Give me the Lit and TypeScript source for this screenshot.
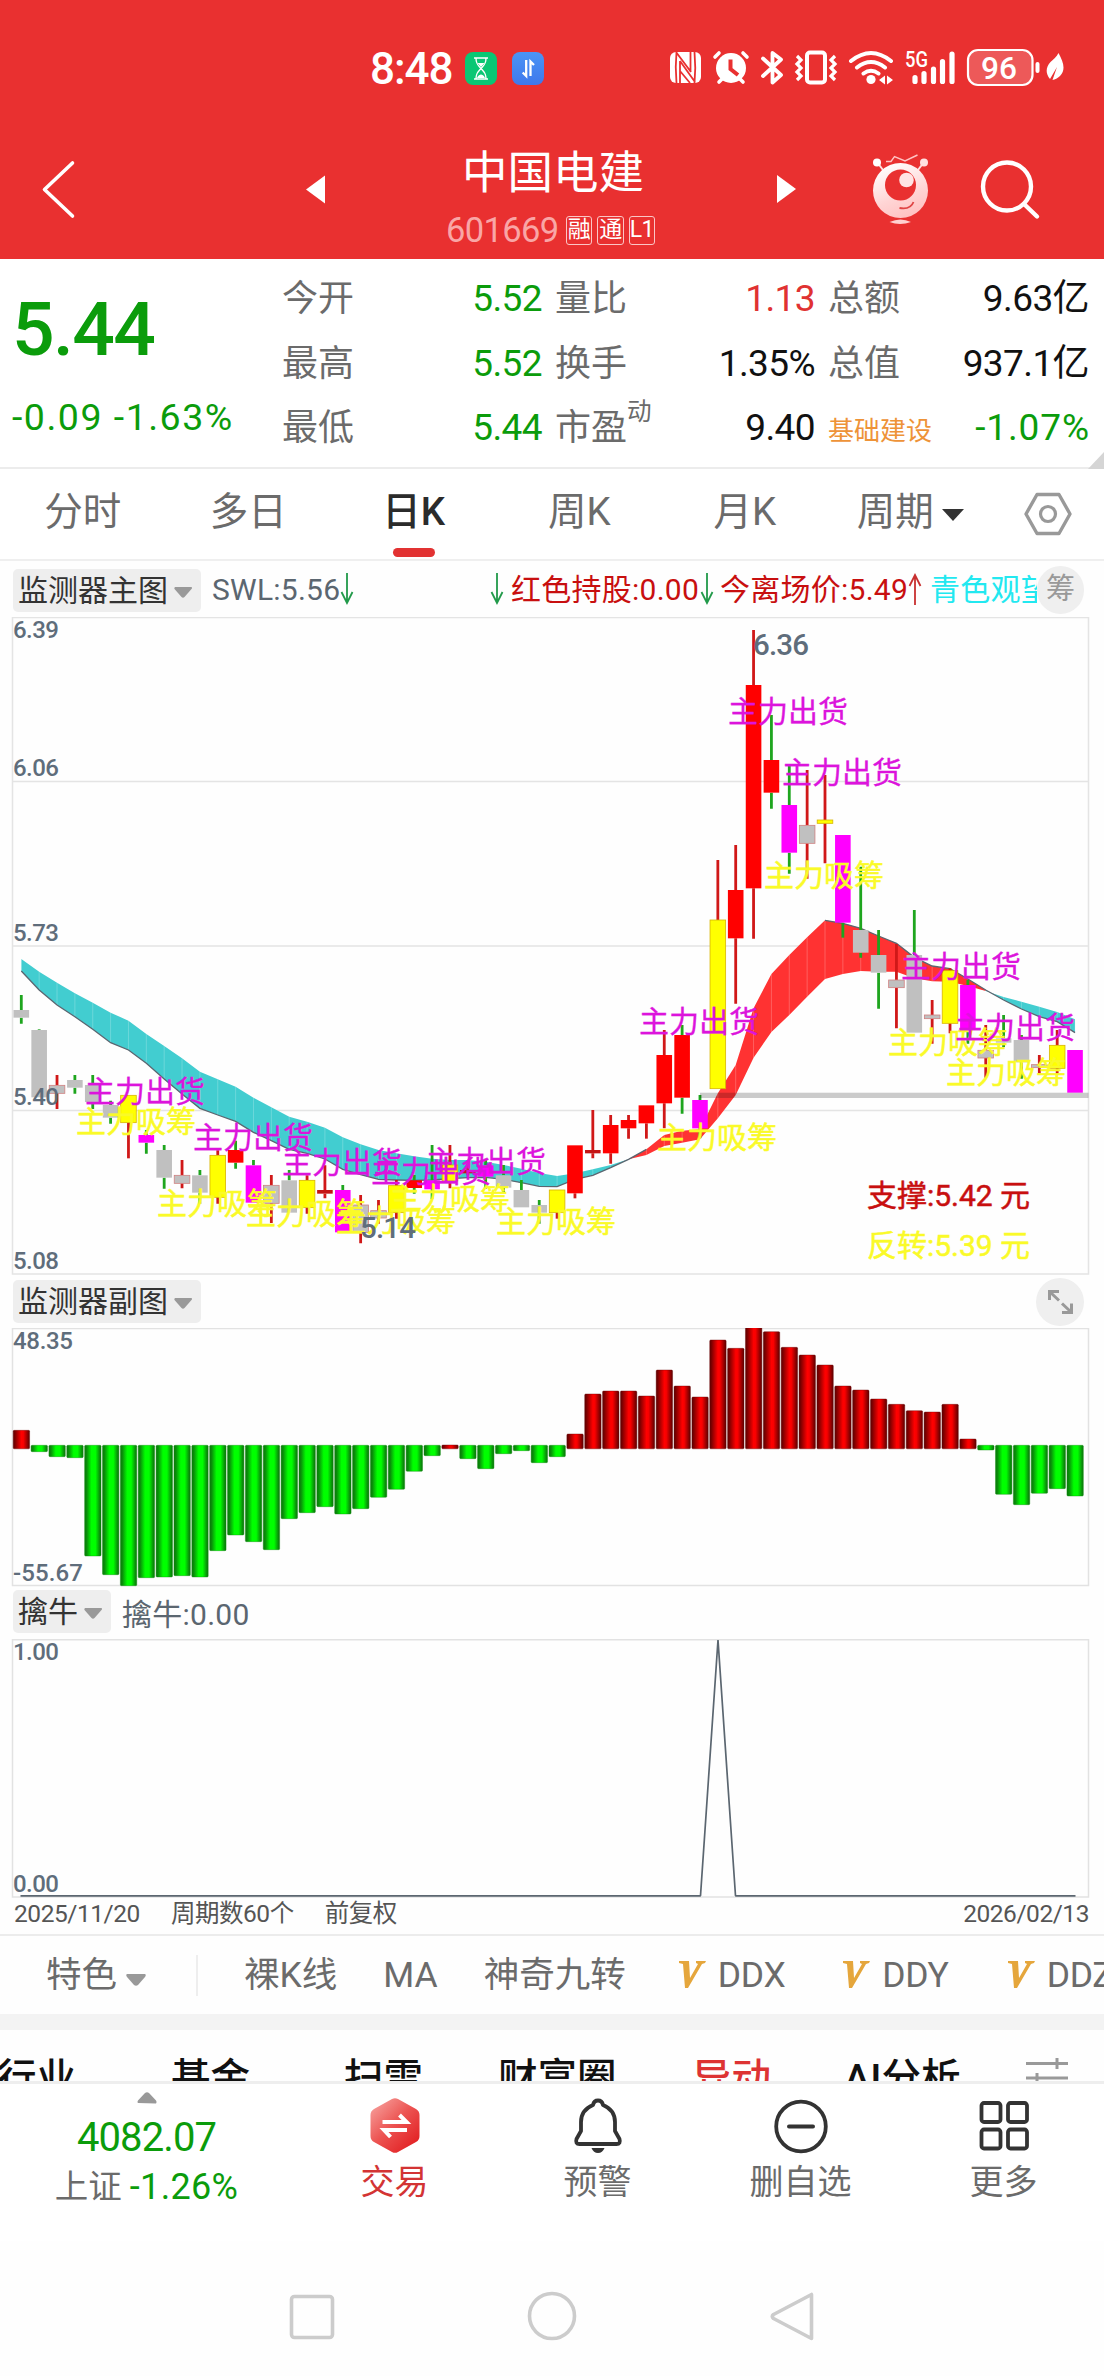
import { LitElement, html, svg, css } from "lit";
import { customElement, property } from "lit/decorators.js";

const X0 = 21.3;
const STEP = 17.86;
const cx = (i: number) => X0 + STEP * i;
const py = (v: number) => 900 + v / 3;

const FILL: Record<string, string> = { g: "#c0c0c0", r: "#ff0000", y: "#ffff00", m: "#ff00ff", d: "#c41414" };
const UP = "#d01818";
const DOWN = "#1ea51e";

// kind, wick colour (u/d), body top, body bottom, wick top, wick bottom
type Candle = [string, string, number, number, number, number];
const CANDLES: Candle[] = [
  ["g", "d", 330, 353, 285, 371], ["g", "d", 390, 592, 388, 592], ["g", "u", 556, 580, 525, 627],
  ["g", "d", 540, 563, 525, 581], ["g", "d", 555, 606, 525, 627], ["g", "d", 615, 653, 602, 671],
  ["y", "u", 586, 668, 586, 775], ["m", "d", 705, 728, 690, 761], ["g", "d", 750, 833, 735, 866],
  ["g", "u", 826, 850, 780, 865], ["g", "d", 826, 878, 810, 911], ["y", "u", 766, 892, 751, 911],
  ["r", "d", 750, 788, 722, 806], ["m", "d", 796, 908, 780, 908], ["g", "u", 856, 910, 825, 969],
  ["g", "d", 841, 938, 810, 938], ["y", "u", 841, 923, 826, 941], ["d", "u", 870, 881, 796, 895],
  ["m", "d", 870, 997, 855, 997], ["g", "u", 915, 998, 885, 1030], ["g", "u", 932, 954, 900, 971],
  ["y", "u", 857, 938, 840, 956], ["r", "d", 841, 864, 825, 881], ["m", "d", 841, 868, 735, 897],
  ["y", "u", 795, 843, 735, 865], ["d", "u", 810, 820, 796, 826], ["m", "d", 796, 830, 780, 866],
  ["g", "d", 826, 863, 795, 876], ["g", "d", 870, 922, 840, 922], ["g", "d", 915, 938, 900, 971],
  ["y", "u", 870, 938, 870, 956], ["r", "u", 736, 880, 736, 895], ["d", "u", 750, 760, 630, 775],
  ["r", "u", 675, 760, 645, 791], ["r", "u", 660, 685, 645, 716], ["r", "u", 616, 670, 616, 716],
  ["r", "u", 465, 610, 390, 685], ["r", "d", 405, 593, 375, 641], ["m", "d", 600, 685, 585, 715],
  ["y", "u", 60, 566, -120, 566], ["r", "u", -30, 115, -165, 311], ["r", "u", -645, -35, -810, 116],
  ["r", "d", -420, -322, -555, -274], ["m", "d", -285, -142, -408, -79], ["g", "u", -224, -170, -390, -64],
  ["y", "u", -240, -230, -375, -110], ["m", "d", -195, 68, -195, 113], ["g", "d", 90, 158, -100, 173],
  ["g", "d", 165, 218, 90, 326], ["g", "u", 240, 263, 132, 385], ["g", "d", 165, 398, 30, 398],
  ["g", "u", 345, 356, 300, 431], ["y", "u", 212, 370, 205, 400], ["m", "d", 255, 386, 240, 431],
  ["g", "u", 451, 474, 375, 533], ["g", "d", 415, 428, 345, 441], ["g", "d", 420, 487, 405, 536],
  ["g", "u", 494, 503, 465, 521], ["y", "u", 436, 505, 390, 521], ["m", "d", 450, 578, 450, 578],
];

const FAST = [213, 270, 315, 350, 388, 428, 450, 490, 537, 582, 625, 645, 664, 697, 722, 748, 760, 777, 808, 824,
  838, 840, 841, 840, 836, 833, 832, 838, 848, 859, 860, 838, 826, 803, 778, 748, 705, 692, 688, 580,
  495, 325, 222, 165, 112, 61, 70, 85, 108, 130, 172, 198, 206, 237, 270, 300, 327, 350, 365, 398];
const SLOW = [177, 215, 248, 280, 308, 338, 362, 402, 438, 475, 515, 538, 560, 593, 622, 650, 665, 683, 712, 733,
  750, 760, 769, 776, 780, 780, 785, 795, 806, 819, 828, 820, 808, 795, 778, 765, 738, 728, 718, 655,
  585, 473, 396, 345, 290, 237, 222, 213, 215, 215, 235, 244, 245, 258, 273, 291, 305, 320, 336, 358];

const BARS = [451, 515, 530, 533, 828, 884, 917, 893, 891, 887, 891, 812, 765, 785, 809, 716, 698, 680, 702, 686,
  652, 628, 574, 527, 495, 536, 566, 521, 512, 548, 530, 462, 342, 333, 333, 348, 270, 318, 351, 180,
  205, 141, 155, 202, 225, 255, 318, 330, 357, 373, 392, 396, 373, 477, 510, 643, 674, 640, 626, 648];

const SELL: [number, number][] = [[86, 1091], [194, 1137], [283, 1162], [372, 1171], [427, 1161], [640, 1021], [902, 966], [956, 1027], [729, 711], [783, 772]];
const BUY: [number, number][] = [[77, 1121], [158, 1203], [247, 1213], [337, 1220], [391, 1198], [497, 1221], [658, 1137], [765, 875], [889, 1042], [947, 1072]];

const CROSS_A = 34;
const CROSS_B = 54;
const ribbon = (a: number, b: number) => {
  const idx = Array.from({ length: b - a + 1 }, (_, k) => a + k);
  return [...idx.map((i) => `${cx(i)},${py(SLOW[i])}`), ...idx.reverse().map((i) => `${cx(i)},${py(FAST[i])}`)].join(" ");
};

const FONT = `Roboto, "Noto Sans CJK SC", sans-serif`;

@customElement("status-bar")
export class StatusBar extends LitElement {
  static styles = css`
    :host { display: flex; height: 130px; box-sizing: border-box; padding: 48px 39px 0 370px; color: #fff; }
    .clock { font-size: 44px; font-weight: 500; line-height: 42px; letter-spacing: -1px; width: 95px; }
    .apps { margin-top: 4px; display: flex; gap: 15px; height: 33px; flex: 1; }
    svg { display: block; }
  `;
  render() {
    return html`
      <div class="clock">8:48</div>
      <div class="apps">
        <svg width="32" height="33" viewBox="0 0 32 33"><rect width="32" height="33" rx="8" fill="#0ac774"/>
          <g fill="none" stroke="#fff" stroke-width="1.4"><path d="M9 6h14M9 27h14M11 6c0 6 2 7 5 10.500C19 13 21 12 21 6M11 27c0-6 2-7 5-10.500 3 3.500 5 4.500 5 10.500"/></g>
          <path d="M12.500 11h7l-3.500 4zM12 26c1-3 3-3.500 4-3.500s3 .5 4 3.500z" fill="#fff"/></svg>
        <svg width="32" height="33" viewBox="0 0 32 33"><defs><linearGradient id="b" x2="0" y2="1"><stop stop-color="#4b94f5"/><stop offset="1" stop-color="#3f78ec"/></linearGradient></defs>
          <rect width="32" height="33" rx="8" fill="url(#b)"/><g fill="none" stroke="#fff" stroke-width="2.300"><path d="M14.200 8v16l-3.500-3.500M18.500 24V9.500l3.500 3.500"/></g></svg>
      </div>
      <svg width="396" height="40" viewBox="669 48 396 40">
        <rect x="670" y="52" width="31" height="31" rx="6" fill="#fff"/>
        <g fill="none" stroke="#e93030" stroke-width="1.800"><path d="M676.500 52q-1.500 15 0 31M680 61v22M690.500 52v20M694.500 83q1.500-15 0-31M676 52l15 20M680 61l15 21M680 71l10 12"/></g>
        <g stroke="#fff" stroke-width="3.600" stroke-linecap="round" fill="none"><path d="M715 57l4-4M747 57l-4-4M719 82l4-4M743 82l-4-4"/></g>
        <circle cx="731" cy="68" r="15" fill="#fff"/><path d="M730.500 59.500v9.500l7.500 6" fill="none" stroke="#e93030" stroke-width="4"/>
        <path d="M763 58.500l18 16.500-8.500 7.500V53l8.500 6.500L763 76" fill="none" stroke="#fff" stroke-width="3.800" stroke-linejoin="round" stroke-linecap="round"/>
        <rect x="807" y="52.500" width="18" height="30" rx="3" fill="none" stroke="#fff" stroke-width="4"/>
        <path d="M797 56l4 4-4 4 4 4-4 4 4 4-4 4M835 56l-4 4 4 4-4 4 4 4-4 4 4 4" fill="none" stroke="#fff" stroke-width="3.200"/>
        <g fill="none" stroke="#fff" stroke-width="4" stroke-linecap="round"><path d="M851 61q20-16 40 0M857 67.500q14-11 28 0M863.500 73.500q7.500-5.500 15 0"/></g>
        <circle cx="871" cy="79.500" r="4.600" fill="#fff"/><path d="M885 75.500v9l-6-4.500zM887 75.500v9l6-4.500z" fill="#fff"/>
        <text x="905" y="66.500" font-family="Roboto, sans-serif" font-size="22" font-weight="500" fill="#fff" textLength="23" lengthAdjust="spacingAndGlyphs">5G</text>
        <g stroke="#fff" stroke-width="5.200" stroke-linecap="round"><path d="M915 77.500v4M924 73.500v8M933.500 69v12.500M942.500 61.500v20M952 54v27.500"/></g>
        <rect x="968" y="50" width="64.500" height="35" rx="10" fill="#fff" fill-opacity=".2" stroke="#fff" stroke-width="2.200"/>
        <text x="981" y="78.500" font-family="Roboto, sans-serif" font-size="31" font-weight="500" fill="#fff" textLength="36" lengthAdjust="spacingAndGlyphs">96</text>
        <rect x="1035.500" y="62" width="4" height="11" rx="2" fill="#fff"/>
        <path d="M1058.500 53c5 9 7.500 17 1.500 23-2.500 2.500-5 3.500-7.500 4l4.500-13-7 12c-5-6-4-12 .5-17 3-3 6-5 8-9z" fill="#fff"/>
      </svg>`;
  }
}

@customElement("title-bar")
export class TitleBar extends LitElement {
  static styles = css`
    :host { display: grid; grid-template-columns: 306px 140px 212px 119px 327px; height: 129px; color: #fff; }
    svg { display: block; }
    .mid { text-align: center; padding-top: 17px; }
    .name { font-size: 45.500px; line-height: 54px; margin: 0 -20px 0 -18px; }
    .code { display: flex; justify-content: center; gap: 5px; align-items: center; height: 29px; margin-top: 15px; margin-left: -3px; }
    .num { font-size: 34.500px; line-height: 29px; letter-spacing: -.6px; color: #f9a6a6; margin-right: 2px; }
    .tag { box-sizing: border-box; width: 26.500px; height: 29px; border: 1.500px solid #fbc5c5; border-radius: 3px; font-size: 23px; line-height: 26px; text-align: center; letter-spacing: -.5px; }
  `;
  render() {
    return html`
      <svg width="306" height="129" viewBox="0 130 306 129"><path d="M72.500 163L44.500 189.500L72.500 216" fill="none" stroke="#fff" stroke-width="3.600" stroke-linecap="round" stroke-linejoin="round"/></svg>
      <svg width="20" height="129" viewBox="306 130 20 129"><path d="M306 189.500l19-14v28z" fill="#fff"/></svg>
      <div class="mid">
        <div class="name">中国电建</div>
        <div class="code"><span class="num">601669</span><span class="tag">融</span><span class="tag">通</span><span class="tag">L1</span></div>
      </div>
      <span></span>
      <svg width="327" height="129" viewBox="777 130 327 129">
        <path d="M796 189l-19-14v28z" fill="#fff"/>
        <defs><linearGradient id="rb" x1=".3" y1="0" x2=".7" y2="1"><stop stop-color="#fff"/><stop offset=".6" stop-color="#ffd4d4"/><stop offset="1" stop-color="#ffc0c0"/></linearGradient></defs>
        <path d="M877 162l6 8M924 162l-6 8" stroke="#ffdede" stroke-width="2"/>
        <circle cx="877" cy="162.500" r="4" fill="#fff"/><circle cx="924" cy="162.500" r="4" fill="#ffe0e0"/>
        <path d="M886 161.500h5l3.500-5L905 161l12.500-6" fill="none" stroke="#ffc4c4" stroke-width="1.400"/>
        <circle cx="900.500" cy="190.500" r="27.500" fill="url(#rb)"/><circle cx="900.500" cy="185" r="15.500" fill="#e93030"/>
        <circle cx="906.500" cy="180" r="7.300" fill="#ffe3e3"/><path d="M899.500 208q11 2 14-6" fill="none" stroke="#e04545" stroke-width="1.800"/>
        <path d="M889.500 222q11-5 21.500 0-11 4-21.500 0z" fill="#ffd0d0"/>
        <circle cx="1007" cy="186.500" r="24" fill="none" stroke="#fff" stroke-width="4.400"/><path d="M1024 204l13 12.500" stroke="#fff" stroke-width="4.400" stroke-linecap="round"/>
      </svg>`;
  }
}

@customElement("quote-panel")
export class QuotePanel extends LitElement {
  static styles = css`
    :host { display: flex; position: relative; height: 210px; box-sizing: border-box; border-bottom: 2px solid #ececec; background: #fff; }
    .main { width: 282px; color: #0b9c0b; padding: 25px 0 0 12px; box-sizing: border-box; }
    .price { font-size: 75px; font-weight: 500; line-height: 90px; letter-spacing: -1.600px; }
    .chg { font-size: 37.500px; line-height: 40px; margin-top: 23px; letter-spacing: 1.500px; white-space: pre; }
    .col { padding-top: 8px; font-size: 36px; }
    .c1 { width: 260px; margin-right: 13px; }
    .c2 { width: 260px; margin-right: 13px; }
    .c3 { width: 261px; }
    .row { display: flex; justify-content: space-between; line-height: 64.500px; height: 64.500px; white-space: nowrap; }
    .label { color: #6b6b6b; }
    .val { font-size: 37px; letter-spacing: -.6px; color: #111; }
    .wide { letter-spacing: .9px; margin-right: -1px; }
    .down { color: #0b9c0b; }
    .up { color: #e03232; }
    .sup { font-size: 24.500px; vertical-align: 20px; line-height: 0; }
    .industry { font-size: 26px; color: #ee9338; }
    .corner { position: absolute; right: 0; bottom: -2px; width: 16px; height: 17px; background: #d5d5d5; clip-path: polygon(100% 0, 100% 100%, 0 100%); }
  `;
  render() {
    const row = (l: unknown, v: string, c = "") => html`<div class="row"><span class="label">${l}</span><span class="val ${c}">${v}</span></div>`;
    return html`
      <div class="main"><div class="price">5.44</div><div class="chg">-0.09 -1.63%</div></div>
      <div class="col c1">${row("今开", "5.52", "down")}${row("最高", "5.52", "down")}${row("最低", "5.44", "down")}</div>
      <div class="col c2">${row("量比", "1.13", "up")}${row("换手", "1.35%")}${row(html`市盈<span class="sup">动</span>`, "9.40")}</div>
      <div class="col c3">${row("总额", "9.63亿")}${row("总值", "937.1亿")}${row(html`<span class="industry">基础建设</span>`, "-1.07%", "down wide")}</div>
      <div class="corner"></div>`;
  }
}

@customElement("period-tabs")
export class PeriodTabs extends LitElement {
  static styles = css`
    :host { display: grid; grid-template-columns: repeat(6, 165.500px) 1fr; height: 92px; box-sizing: border-box; border-bottom: 2px solid #efefef; background: #fff; }
    .tab { display: flex; flex-direction: column; align-items: center; font-size: 38.500px; line-height: 44px; padding-top: 21px; color: #6b6b6b; white-space: nowrap; }
    .on { color: #2b2b2b; font-weight: 500; }
    .bar { width: 42px; height: 9px; border-radius: 5px; background: #e23232; margin-top: 14px; }
    .drop { flex-direction: row; align-items: flex-start; justify-content: center; gap: 8px; }
    .drop svg { margin-top: 19px; }
    .gear { display: block; margin: 23px 0 0 31px; }
  `;
  render() {
    return html`
      <div class="tab">分时</div><div class="tab">多日</div>
      <div class="tab on">日K<div class="bar"></div></div>
      <div class="tab">周K</div><div class="tab">月K</div>
      <div class="tab drop">周期<svg width="22" height="12"><path d="M0 0h22L11 12z" fill="#333"/></svg></div>
      <svg class="gear" width="48" height="44" viewBox="0 0 48 44"><path d="M13 2.500h22l11 19.500-11 19.500H13L2 22z" fill="none" stroke="#999" stroke-width="3.400" stroke-linejoin="round"/><circle cx="24" cy="22" r="7.500" fill="none" stroke="#999" stroke-width="3.200"/></svg>`;
  }
}

@customElement("indicator-pill")
export class IndicatorPill extends LitElement {
  @property() label = "";
  static styles = css`
    :host { display: flex; align-items: center; gap: 6px; height: 43px; box-sizing: border-box; padding: 0 9px 0 5px; border-radius: 5px; background: #eee; color: #333; font-size: 30px; line-height: 43px; letter-spacing: 0; white-space: nowrap; flex: none; }
    svg { margin-top: 4px; }
  `;
  render() {
    return html`${this.label}<svg width="18" height="11"><path d="M1 0h16.500q1 1 0 2L10.500 10q-1.500 1.500-3 0L.5 2Q0 1 1 0z" fill="#999"/></svg>`;
  }
}

@customElement("main-chart")
export class MainChart extends LitElement {
  static styles = css`
    :host { display: block; height: 715px; }
    .head { display: flex; align-items: center; height: 58px; margin-bottom: -2px; padding-left: 13px; box-sizing: border-box; font-size: 30px; line-height: 40px; white-space: nowrap; }
    .legend { display: grid; grid-template-columns: 128px 150px 21px 189px 20px 188px 22px 107px; margin-left: 11px; width: 825px; flex: none; overflow: hidden; }
    .legend span { letter-spacing: .25px; }
    .swl { color: #5b6670; }
    .red { color: #c80f0f; }
    .cy { color: #22e8f0; overflow: hidden; }
    .legend svg { display: block; margin-top: 3px; }
    .chip { width: 47px; height: 48px; flex: none; border-radius: 24px; background: #efefef; color: #999; text-align: center; font-size: 29px; line-height: 46px; }
    .plot { display: block; }
  `;
  arrow(up: boolean) {
    return html`<svg width="14" height="32" viewBox="0 0 14 32"><path d=${up ? "M7 32V2M1.500 13L7 2l5.500 11" : "M7 0v30M1.500 19L7 30l5.500-11"} fill="none" stroke=${up ? "#c83030" : "#229a4a"} stroke-width="1.800"/></svg>`;
  }
  render() {
    const red = "#ff3232";
    const cyan = "#42cdd0";
    return html`
      <div class="head">
        <indicator-pill label="监测器主图"></indicator-pill>
        <div class="legend">
          <span class="swl">SWL:5.56</span>${this.arrow(false)}${this.arrow(false)}
          <span class="red">红色持股:0.00</span>${this.arrow(false)}
          <span class="red">今离场价:5.49</span>${this.arrow(true)}
          <span class="cy">青色观望</span>
        </div>
        <div class="chip">筹</div>
      </div>
      <svg class="plot" width="1104" height="659" viewBox="0 617 1104 659" font-family=${FONT}>
        <path d="M12.500 617.500H1088.500V1274H12.500zM13 781.500H1088M13 946H1088M13 1110.500H1088" fill="none" stroke="#e4e4e4" stroke-width="1.500"/>
        <polygon points=${ribbon(0, CROSS_A)} fill=${cyan}/>
        <polygon points=${ribbon(CROSS_A, CROSS_B)} fill=${red}/>
        <polygon points=${ribbon(CROSS_B, 59)} fill=${cyan}/>
        ${FAST.map((f, i) => svg`<path d="M${cx(i)} ${py(f)}V${py(SLOW[i])}" stroke="#fff" stroke-opacity=".22" stroke-width="1"/>`)}
        <polyline points=${FAST.slice(0, 36).map((f, i) => `${cx(i)},${py(f)}`).join(" ")} fill="none" stroke="#5b6670" stroke-width="1.300"/>
        <polyline points=${FAST.slice(45).map((f, i) => `${cx(i + 45)},${py(f)}`).join(" ")} fill="none" stroke="#5b6670" stroke-width="1.300"/>
        ${CANDLES.map(([k, w, t, b, wt, wb], i) => {
          const x = cx(i);
          const outline = w === "u" && (k === "g" || k === "y");
          return svg`
            <path d="M${x} ${py(wt)}V${py(t)}M${x} ${py(b)}V${py(wb)}" stroke=${w === "u" ? UP : DOWN} stroke-width="2.800"/>
            <rect x=${x - 7.8} y=${py(t)} width="15.600" height=${(b - t) / 3} fill=${FILL[k]} stroke=${outline ? (k === "y" ? "#d8b400" : "#d08080") : "none"} stroke-width=".8"/>`;
        })}
        <rect x="700" y="1092.700" width="388.500" height="5.300" fill="#000" fill-opacity=".2"/>
        <g font-size="24" font-weight="500" fill="#5f6d7b">
          <text x="13" y="638" textLength="46">6.39</text><text x="13" y="776" textLength="46">6.06</text>
          <text x="13" y="941" textLength="46">5.73</text><text x="13" y="1105" textLength="46">5.40</text><text x="13" y="1269" textLength="46">5.08</text>
        </g>
        <g font-size="30" fill="#fafa28" stroke="#fafa28" stroke-width=".5">${BUY.map(([x, y]) => svg`<text x=${x - 1} y=${y + 10.5}>主力吸筹</text>`)}</g>
        <g font-size="30" fill="#dc14dc" stroke="#dc14dc" stroke-width=".3">${SELL.map(([x, y]) => svg`<text x=${x - 1} y=${y + 10.5}>主力出货</text>`)}</g>
        <g font-size="29.500" font-weight="500" fill="#5f6d7b"><text x="360" y="1238" textLength="56">5.14</text><text x="753" y="654.500" textLength="56">6.36</text></g>
        <g font-size="30" stroke-width=".5"><text x="867" y="1206" fill="#c80f0f" stroke="#c80f0f" textLength="163">支撑:5.42 元</text><text x="867" y="1256" fill="#fafa28" stroke="#fafa28" textLength="163">反转:5.39 元</text></g>
      </svg>`;
  }
}

@customElement("bar-chart")
export class BarChart extends LitElement {
  static styles = css`
    :host { display: block; height: 311px; }
    .head { display: flex; justify-content: space-between; align-items: center; height: 52px; padding: 0 20px 0 13px; }
    .head indicator-pill { margin-top: -1px; }
    svg { display: block; }
  `;
  render() {
    return html`
      <div class="head">
        <indicator-pill label="监测器副图"></indicator-pill>
        <svg width="48" height="48" viewBox="0 0 48 48"><circle cx="24" cy="24" r="24" fill="#efefef"/><g fill="none" stroke="#999" stroke-width="3"><path d="M13.500 22V13.500H23M14 14l9 8.500M35.500 25.500V34.500H26M35 34l-9-8.500"/></g></svg>
      </div>
      <svg width="1104" height="259" viewBox="0 1328 1104 259" font-family=${FONT}>
        <defs>
          <linearGradient id="gr"><stop stop-color="#5c0000"/><stop offset=".1" stop-color="#780000"/><stop offset=".5" stop-color="#ff0000"/><stop offset=".62" stop-color="#f80000"/><stop offset="1" stop-color="#5c0000"/></linearGradient>
          <linearGradient id="gg"><stop stop-color="#0a7a0a"/><stop offset=".12" stop-color="#0a8c0a"/><stop offset=".42" stop-color="#00ff00"/><stop offset=".66" stop-color="#00ff00"/><stop offset=".92" stop-color="#0a8c0a"/><stop offset="1" stop-color="#0a7a0a"/></linearGradient>
        </defs>
        <path d="M12.500 1328.500H1088.500V1585.500H12.500z" fill="none" stroke="#e2e2e2" stroke-width="1.500"/>
        ${BARS.map((v, i) => {
          const up = v < 500;
          const y = up ? 1280 + v / 3 : 1445.3;
          const h = up ? 1448.8 - y : 1280 + v / 3 - y;
          return svg`<rect x=${cx(i) - 8.1} y=${y} width="16.400" height=${h} rx="1" fill=${up ? "url(#gr)" : "url(#gg)"} stroke=${up ? "#6a0000" : "#0a8c0a"} stroke-width=".4"/>`;
        })}
        <g font-size="24" font-weight="500" fill="#5f6d7b"><text x="13" y="1349" textLength="60">48.35</text><text x="13" y="1581" textLength="70">-55.67</text></g>
      </svg>`;
  }
}

@customElement("signal-chart")
export class SignalChart extends LitElement {
  static styles = css`
    :host { display: block; height: 349px; box-sizing: border-box; border-bottom: 2px solid #ececec; }
    .head { display: flex; align-items: center; gap: 11px; height: 49px; padding: 0 0 3px 13px; font-size: 30px; color: #5b6670; letter-spacing: .25px; }
    .foot { display: flex; height: 36px; line-height: 32px; padding: 0 15px 0 14px; font-size: 24.500px; letter-spacing: -.45px; color: #555; }
    .foot span + span { margin-left: 31px; }
    .foot .end { margin-left: auto !important; }
    svg { display: block; }
  `;
  render() {
    return html`
      <div class="head"><indicator-pill label="擒牛"></indicator-pill><span>擒牛:0.00</span></div>
      <svg width="1104" height="259" viewBox="0 1639 1104 259" font-family=${FONT}>
        <path d="M12.500 1639.700H1088.500V1897H12.500z" fill="none" stroke="#e2e2e2" stroke-width="1.500"/>
        <path d="M20.500 1895.800H700.500L718 1640L735.500 1895.800H1075.500" fill="none" stroke="#5b6670" stroke-width="1.700" stroke-linejoin="bevel"/>
        <g font-size="24" font-weight="500" fill="#5f6d7b"><text x="13" y="1660" textLength="46">1.00</text><text x="13" y="1891.500" textLength="46">0.00</text></g>
      </svg>
      <div class="foot"><span>2025/11/20</span><span>周期数60个</span><span>前复权</span><span class="end">2026/02/13</span></div>`;
  }
}

@customElement("indicator-strip")
export class IndicatorStrip extends LitElement {
  static styles = css`
    :host { display: flex; height: 94px; box-sizing: border-box; border-bottom: 16px solid #f3f3f3; overflow: hidden; font-size: 35.500px; line-height: 79px; color: #6b6b6b; white-space: nowrap; padding-left: 46px; }
    :host > * { flex: none; }
    .feat { display: flex; width: 150px; gap: 9px; box-sizing: border-box; }
    .feat svg { margin-top: 38px; }
    .rule { width: 2px; height: 41px; background: #eee; margin-top: 19px; }
    .item { margin-left: 46px; }
    .ind { display: flex; margin-left: 51px; width: 113.500px; gap: 8px; letter-spacing: -.3px; }
    .ind svg { display: block; margin: 25px 4px 0 1px; }
  `;
  render() {
    const v = html`<svg width="28" height="27" viewBox="0 0 28 27"><path d="M1 0h10l1 17L20 3l-2-1V0h10l-1 2-3 1L10 27H7L5 3 1 2z" fill="#e5a63c"/></svg>`;
    return html`
      <div class="feat">特色<svg width="20" height="12"><path d="M1 0h18q1.500 1 0 3l-7 8q-2 1.500-4 0L1 3Q-.5 1 1 0z" fill="#999"/></svg></div>
      <div class="rule"></div>
      <span class="item">裸K线</span><span class="item">MA</span><span class="item">神奇九转</span>
      <div class="ind">${v}DDX</div><div class="ind">${v}DDY</div><div class="ind">${v}DDZ</div>`;
  }
}

@customElement("content-tabs")
export class ContentTabs extends LitElement {
  static styles = css`
    :host { display: grid; grid-template-columns: 171px 173px 154px 194px 152px 182px 78px; height: 51px; overflow: hidden; font-size: 39.500px; font-weight: 500; line-height: 56px; color: #111; white-space: nowrap; box-sizing: border-box; padding-top: 21px; }
    .first { margin-left: -3px; }
    .on { color: #dd3333; }
    svg { display: block; margin-top: 7px; }
  `;
  render() {
    return html`<span class="first">行业</span><span>基金</span><span>扫雷</span><span>财富圈</span><span class="on">异动</span><span>AI分析</span>
      <svg width="42" height="40" viewBox="0 0 42 40" fill="none" stroke="#999" stroke-width="3"><path d="M0 5.500h42M31 0v11M0 20h42M11 15v11"/></svg>`;
  }
}

@customElement("action-bar")
export class ActionBar extends LitElement {
  static styles = css`
    :host { display: grid; grid-template-columns: 293px repeat(4, 203px); height: 160px; box-sizing: border-box; border-top: 3px solid #eee; background: #fff; color: #6b6b6b; }
    .index { display: flex; flex-direction: column; align-items: center; padding-top: 8px; }
    .pts { font-size: 40px; line-height: 44px; margin-top: 12px; color: #0b9c0b; letter-spacing: -.9px; }
    .line { display: flex; gap: 8px; font-size: 33.500px; line-height: 40px; margin-top: 7px; white-space: nowrap; }
    .pct { font-size: 36px; color: #0b9c0b; letter-spacing: .3px; }
    .act { display: flex; flex-direction: column; align-items: center; font-size: 34px; line-height: 40px; padding-top: 13px; }
    .act span { margin-top: 8px; }
    .red { color: #d33434; }
    svg { display: block; }
  `;
  render() {
    return html`
      <div class="index">
        <svg width="20" height="12"><path d="M1 11q-1-1 0-2.500L8 1q2-1.500 4 0l7 7.500q1 1.500 0 3z" fill="#999"/></svg>
        <div class="pts">4082.07</div>
        <div class="line"><span>上证</span><span class="pct">-1.26%</span></div>
      </div>
      <div class="act red">
        <svg width="50" height="57" viewBox="0 0 50 57"><defs><linearGradient id="hx" x1="0" y1=".1" x2=".8" y2="1"><stop stop-color="#f7a29e"/><stop offset=".5" stop-color="#ec5351"/><stop offset="1" stop-color="#e21f22"/></linearGradient></defs>
          <path d="M22 2q3-1.700 6 0l18 10q3.500 2 3.500 6v21q0 4-3.500 6L28 55q-3 1.700-6 0L4 45Q.5 43 .5 39V18q0-4 3.500-6z" fill="url(#hx)"/><path d="M12.500 25h24l-7-7M37 33H14l6.500 7" fill="none" stroke="#fff" stroke-width="4"/></svg>
        <span>交易</span></div>
      <div class="act">
        <svg width="50" height="57" viewBox="0 0 50 57"><path d="M25 3.500q4 0 5 4.500 12 5 12 17v9l4.500 8q1.500 5-3 5H6.500q-4.500 0-3-5L8 34v-9Q8 13 20 8q1-4.500 5-4.500z" fill="none" stroke="#333" stroke-width="3.800" stroke-linejoin="round"/><path d="M18.500 51h13q-2 5-6.500 5t-6.500-5z" fill="#333"/></svg>
        <span>预警</span></div>
      <div class="act">
        <svg width="54" height="57" viewBox="0 0 54 57"><circle cx="27" cy="29.500" r="24.800" fill="none" stroke="#333" stroke-width="3.800"/><path d="M15 29.500h24" stroke="#333" stroke-width="4" stroke-linecap="round"/></svg>
        <span>删自选</span></div>
      <div class="act">
        <svg width="50" height="57" viewBox="0 0 50 57" fill="none" stroke="#333" stroke-width="3.800"><rect x="2.500" y="6" width="19" height="19" rx="2.500"/><rect x="29" y="6" width="19" height="19" rx="2.500"/><rect x="2.500" y="32.500" width="19" height="19" rx="2.500"/><rect x="29" y="32.500" width="19" height="19" rx="2.500"/></svg>
        <span>更多</span></div>`;
  }
}

@customElement("app-root")
export class AppRoot extends LitElement {
  static styles = css`
    :host { display: flex; flex-direction: column; width: 1104px; height: 2376px; overflow: hidden; background: #fefefe; font-family: Roboto, "Noto Sans CJK SC", sans-serif; }
    .top { background: #e93030; height: 259px; }
    :host > * { flex: none; }
    .nav { padding-top: 47px; }
    .nav svg { display: block; }
  `;
  render() {
    return html`
      <div class="top"><status-bar></status-bar><title-bar></title-bar></div>
      <quote-panel></quote-panel>
      <period-tabs></period-tabs>
      <main-chart></main-chart>
      <bar-chart></bar-chart>
      <signal-chart></signal-chart>
      <indicator-strip></indicator-strip>
      <content-tabs></content-tabs>
      <action-bar></action-bar>
      <div class="nav"><svg width="1104" height="60" viewBox="0 2289 1104 60" fill="none" stroke="#ccc" stroke-width="3.600">
        <rect x="291.500" y="2297.500" width="41" height="41" rx="3"/><circle cx="552" cy="2317" r="22.500"/><path d="M811.500 2295.500v44l-38-20q-2.500-2 0-4z" stroke-linejoin="round"/></svg></div>`;
  }
}
